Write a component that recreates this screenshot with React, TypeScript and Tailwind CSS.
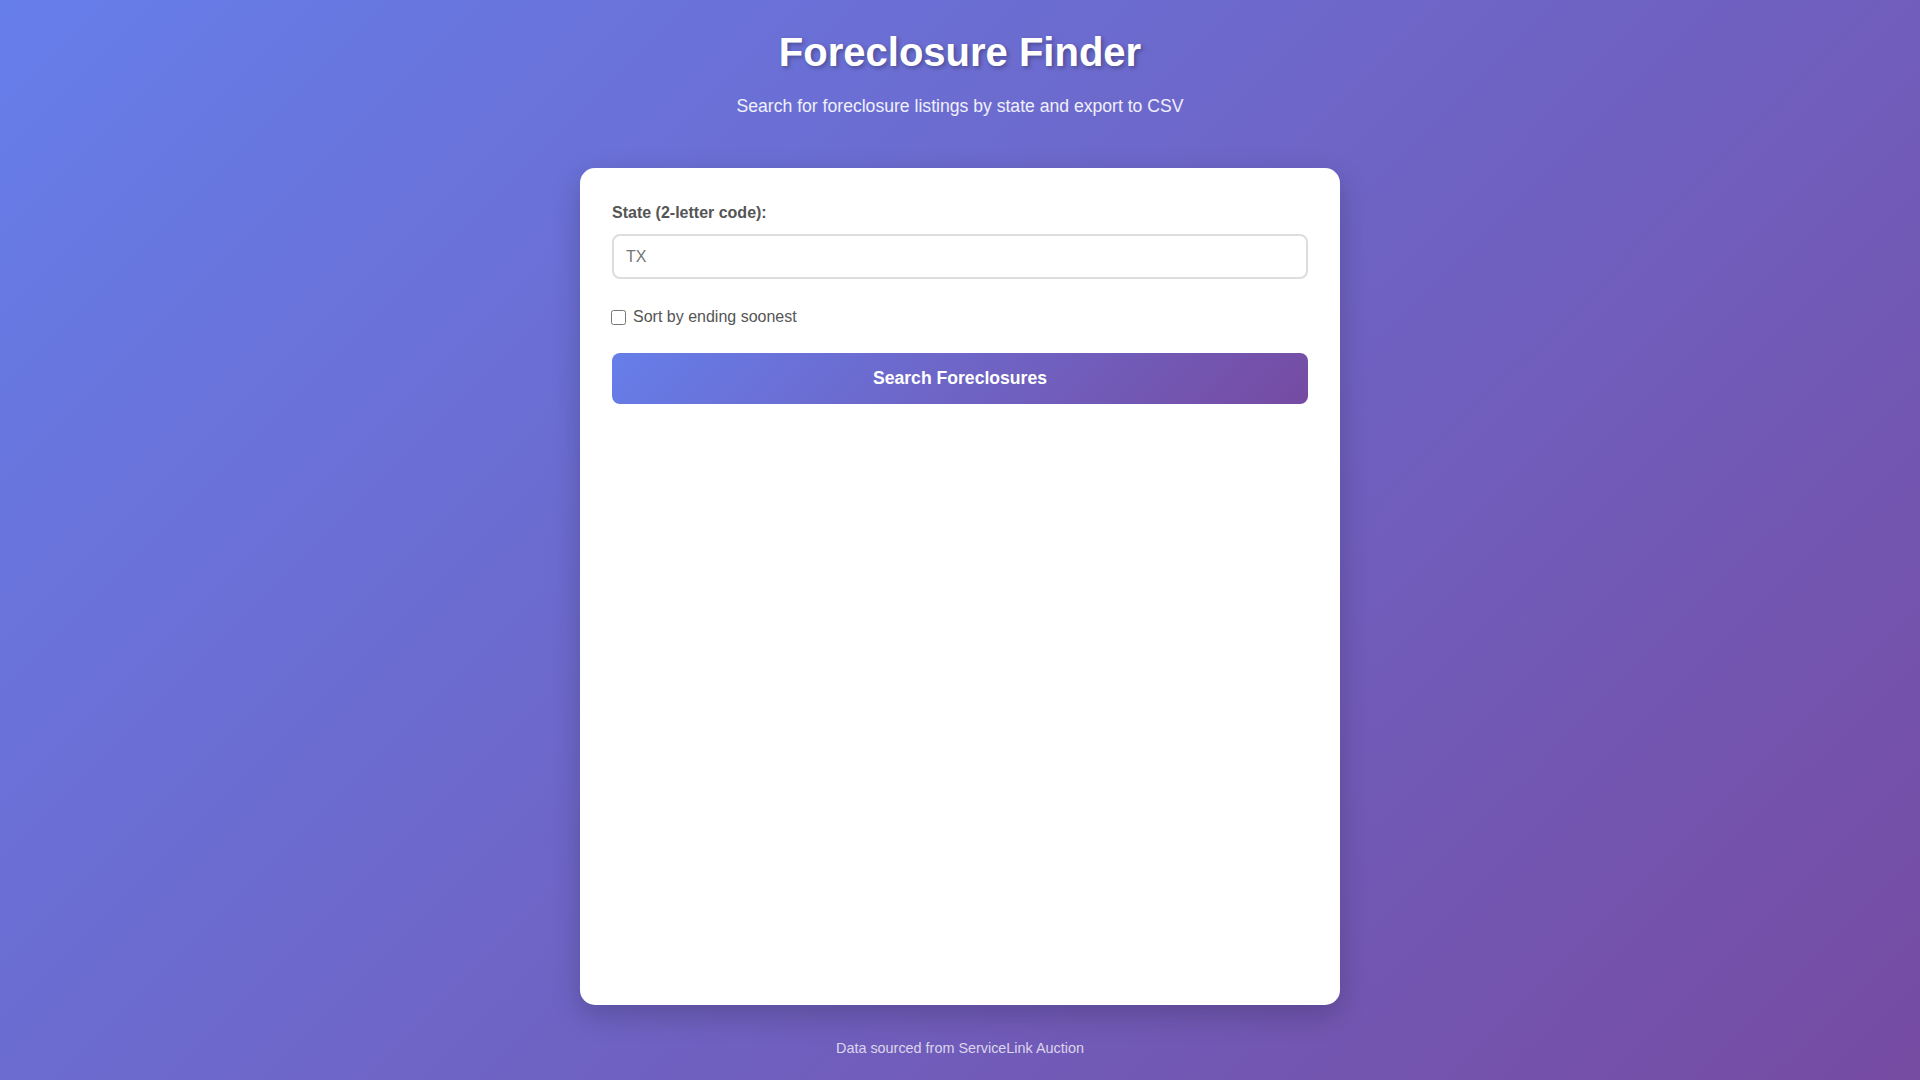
import { useState } from "react";

export default function App() {
  const [state, setState] = useState("");
  const [sortSoonest, setSortSoonest] = useState(false);

  return (
    <div
      className="min-h-screen bg-[linear-gradient(135deg,#667eea_0%,#764ba2_100%)] px-5 pt-[29px] pb-5 text-white"
      style={{ fontFamily: '"Liberation Sans", Arial, sans-serif' }}
    >
      {/* Header */}
      <header className="text-center">
        <h1 className="text-[40px] font-bold leading-[46px] [text-shadow:2px_2px_4px_rgba(0,0,0,0.3)]">
          Foreclosure Finder
        </h1>
        <p className="mt-[21px] text-[17.6px] leading-[21px] text-white/90">
          Search for foreclosure listings by state and export to CSV
        </p>
      </header>

      {/* Search card */}
      <main className="mx-auto mt-[51px] h-[837px] w-[760px] rounded-[15px] bg-white p-8 shadow-[0_10px_30px_rgba(0,0,0,0.2)]">
        <label
          htmlFor="state"
          className="mt-[4px] block text-base font-bold leading-[18px] text-[#555]"
        >
          State (2-letter code):
        </label>
        <input
          id="state"
          type="text"
          maxLength={2}
          value={state}
          onChange={(e) => setState(e.target.value.toUpperCase())}
          placeholder="TX"
          className="mt-[12px] block h-[45px] w-full rounded-lg border-2 border-[#ddd] px-3 text-base text-[#333] placeholder:text-[#757575] outline-none focus:border-[#667eea]"
        />

        <label className="mt-[29px] flex h-[18px] cursor-pointer items-center text-base text-[#555]">
          <input
            type="checkbox"
            checked={sortSoonest}
            onChange={(e) => setSortSoonest(e.target.checked)}
            className="m-0 mr-[7px] ml-[-1px] h-[15px] w-[15px]"
          />
          Sort by ending soonest
        </label>

        <button
          type="button"
          className="mt-[27px] block h-[51px] w-full cursor-pointer rounded-lg bg-[linear-gradient(135deg,#667eea_0%,#764ba2_100%)] text-[17.6px] font-bold text-white"
        >
          Search Foreclosures
        </button>
      </main>

      {/* Footer */}
      <footer className="mt-[35px] text-center text-[14.4px] leading-4 text-white/75">
        Data sourced from ServiceLink Auction
      </footer>
    </div>
  );
}
